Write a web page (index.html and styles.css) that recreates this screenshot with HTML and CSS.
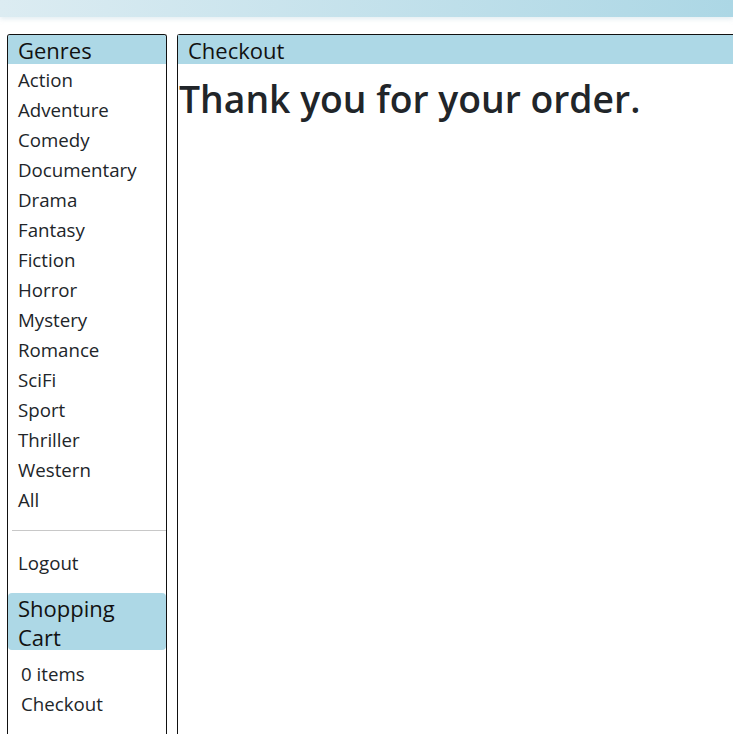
FILE: index.html
```html
<!DOCTYPE html>
<html>
<head>
<meta charset="utf-8">
<link rel="stylesheet" href="styles.css">
</head>
<body>
<div class="topbar"></div>
<div class="layout">
  <aside class="sidebar">
    <div class="panel-title">Genres</div>
    <ul class="genres">
      <li>Action</li>
      <li>Adventure</li>
      <li>Comedy</li>
      <li>Documentary</li>
      <li>Drama</li>
      <li>Fantasy</li>
      <li>Fiction</li>
      <li>Horror</li>
      <li>Mystery</li>
      <li>Romance</li>
      <li>SciFi</li>
      <li>Sport</li>
      <li>Thriller</li>
      <li>Western</li>
      <li>All</li>
    </ul>
    <hr class="divider">
    <div class="logout">Logout</div>
    <div class="cart-title">Shopping Cart</div>
    <ul class="cart">
      <li>0 items</li>
      <li>Checkout</li>
    </ul>
  </aside>
  <main class="content">
    <div class="panel-title">Checkout</div>
    <h1 class="thanks">Thank you for your order.</h1>
  </main>
</div>
</body>
</html>
```
FILE: styles.css
```css
html, body {
  margin: 0;
  padding: 0;
  background: #fff;
  font-family: "Open Sans", "Noto Sans", sans-serif;
  color: #212529;
  overflow: hidden;
}
.topbar {
  height: 17px;
  background: linear-gradient(to right, #dcecf2, #acd7e5);
  box-shadow: 0 2px 5px rgba(170, 200, 215, 0.35);
}
.layout {
  display: flex;
  gap: 10px;
  padding: 17px 0 0 7px;
  align-items: stretch;
  height: 720px;
}
.sidebar {
  width: 158px;
  flex: none;
  border: 1px solid #111;
  border-bottom: none;
  border-radius: 3px 3px 0 0;
  overflow: hidden;
}
.content {
  flex: 1;
  border: 1px solid #111;
  border-right: none;
  border-bottom: none;
  border-radius: 3px 0 0 0;
}
.panel-title {
  background: #add8e6;
  height: 29px;
  line-height: 31px;
  font-size: 22px;
  padding-left: 10px;
  color: #111;
}
.genres, .cart {
  list-style: none;
  margin: 0;
  padding: 1px 0 0;
}
.genres li, .logout {
  font-size: 18.7px;
  line-height: 30px;
  padding-left: 10px;
}
.genres li { height: 30px; }
.divider {
  margin: 15px 0 17px 4px;
  border: none;
  border-top: 1px solid #c8c8c8;
}
.logout { height: 30px; }
.cart-title {
  margin-top: 15px;
  background: #add8e6;
  border-radius: 4px;
  font-size: 22px;
  line-height: 28.5px;
  padding: 1px 10px 0;
  height: 56px;
  color: #111;
}
.cart {
  margin-top: 8px;
}
.cart li {
  font-size: 18.7px;
  line-height: 30px;
  padding-left: 13px;
}
.thanks {
  margin: 12px 0 0 1px;
  font-size: 37.3px;
  font-weight: 600;
  line-height: 46px;
}
```
